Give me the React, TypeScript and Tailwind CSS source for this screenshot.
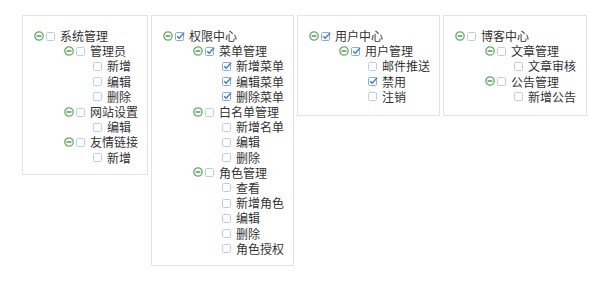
import React from 'react';

type Node = { name: string; checked?: boolean; children?: Node[] };

const trees: { width: string; nodes: Node[] }[] = [
  {
    width: 'w-[126px]',
    nodes: [
      {
        name: '系统管理',
        children: [
          { name: '管理员', children: [{ name: '新增' }, { name: '编辑' }, { name: '删除' }] },
          { name: '网站设置', children: [{ name: '编辑' }] },
          { name: '友情链接', children: [{ name: '新增' }] },
        ],
      },
    ],
  },
  {
    width: 'w-[143px]',
    nodes: [
      {
        name: '权限中心',
        checked: true,
        children: [
          {
            name: '菜单管理',
            checked: true,
            children: [
              { name: '新增菜单', checked: true },
              { name: '编辑菜单', checked: true },
              { name: '删除菜单', checked: true },
            ],
          },
          { name: '白名单管理', children: [{ name: '新增名单' }, { name: '编辑' }, { name: '删除' }] },
          {
            name: '角色管理',
            children: [{ name: '查看' }, { name: '新增角色' }, { name: '编辑' }, { name: '删除' }, { name: '角色授权' }],
          },
        ],
      },
    ],
  },
  {
    width: 'w-[143px]',
    nodes: [
      {
        name: '用户中心',
        checked: true,
        children: [
          {
            name: '用户管理',
            checked: true,
            children: [{ name: '邮件推送' }, { name: '禁用', checked: true }, { name: '注销' }],
          },
        ],
      },
    ],
  },
  {
    width: 'w-[144px]',
    nodes: [
      {
        name: '博客中心',
        children: [
          { name: '文章管理', children: [{ name: '文章审核' }] },
          { name: '公告管理', children: [{ name: '新增公告' }] },
        ],
      },
    ],
  },
];

function Switch() {
  return (
    <svg width="10" height="10" viewBox="0 0 10 10" className="shrink-0">
      <circle cx="5" cy="5" r="4.2" fill="white" stroke="#5fb25f" strokeWidth="1.3" />
      <line x1="2.6" y1="5" x2="7.4" y2="5" stroke="#3d873d" strokeWidth="1.3" />
    </svg>
  );
}

function Box({ checked }: { checked?: boolean }) {
  return (
    <svg width="10" height="10" viewBox="0 0 10 10" className="shrink-0">
      <rect
        x="0.5"
        y="1.5"
        width="8"
        height="8"
        rx="1.2"
        fill="white"
        stroke={checked ? '#86aae8' : '#bccbee'}
        strokeWidth="1"
      />
      {checked && <path d="M2.2 5.2 L4.2 7.3 L9.2 1.6" fill="none" stroke="#3876d6" strokeWidth="1.4" />}
    </svg>
  );
}

const indents = ['pl-[11px]', 'pl-[41px]', 'pl-[70px]'];

function Rows({ nodes, level }: { nodes: Node[]; level: number }) {
  return (
    <>
      {nodes.map((n, i) => (
        <React.Fragment key={i}>
          <div className={`flex items-center h-[15.2px] ${indents[level]}`}>
            {n.children && (
              <span className="mr-[2px] flex">
                <Switch />
              </span>
            )}
            <Box checked={n.checked} />
            <span className="ml-[4px] text-[12px] leading-[15px] text-[#333] whitespace-nowrap">{n.name}</span>
          </div>
          {n.children && <Rows nodes={n.children} level={level + 1} />}
        </React.Fragment>
      ))}
    </>
  );
}

export default function App() {
  return (
    <div
      className="w-[590px] h-[300px] bg-white pt-[15px] pl-[22px] flex items-start gap-[3px]"
      style={{ fontFamily: '"Noto Sans CJK SC", "Microsoft YaHei", sans-serif' }}
    >
      {trees.map((t, i) => (
        <div key={i} className={`${t.width} min-h-[101px] border border-[#e3e3e3] pt-[12px] pb-[9px]`}>
          <Rows nodes={t.nodes} level={0} />
        </div>
      ))}
    </div>
  );
}
